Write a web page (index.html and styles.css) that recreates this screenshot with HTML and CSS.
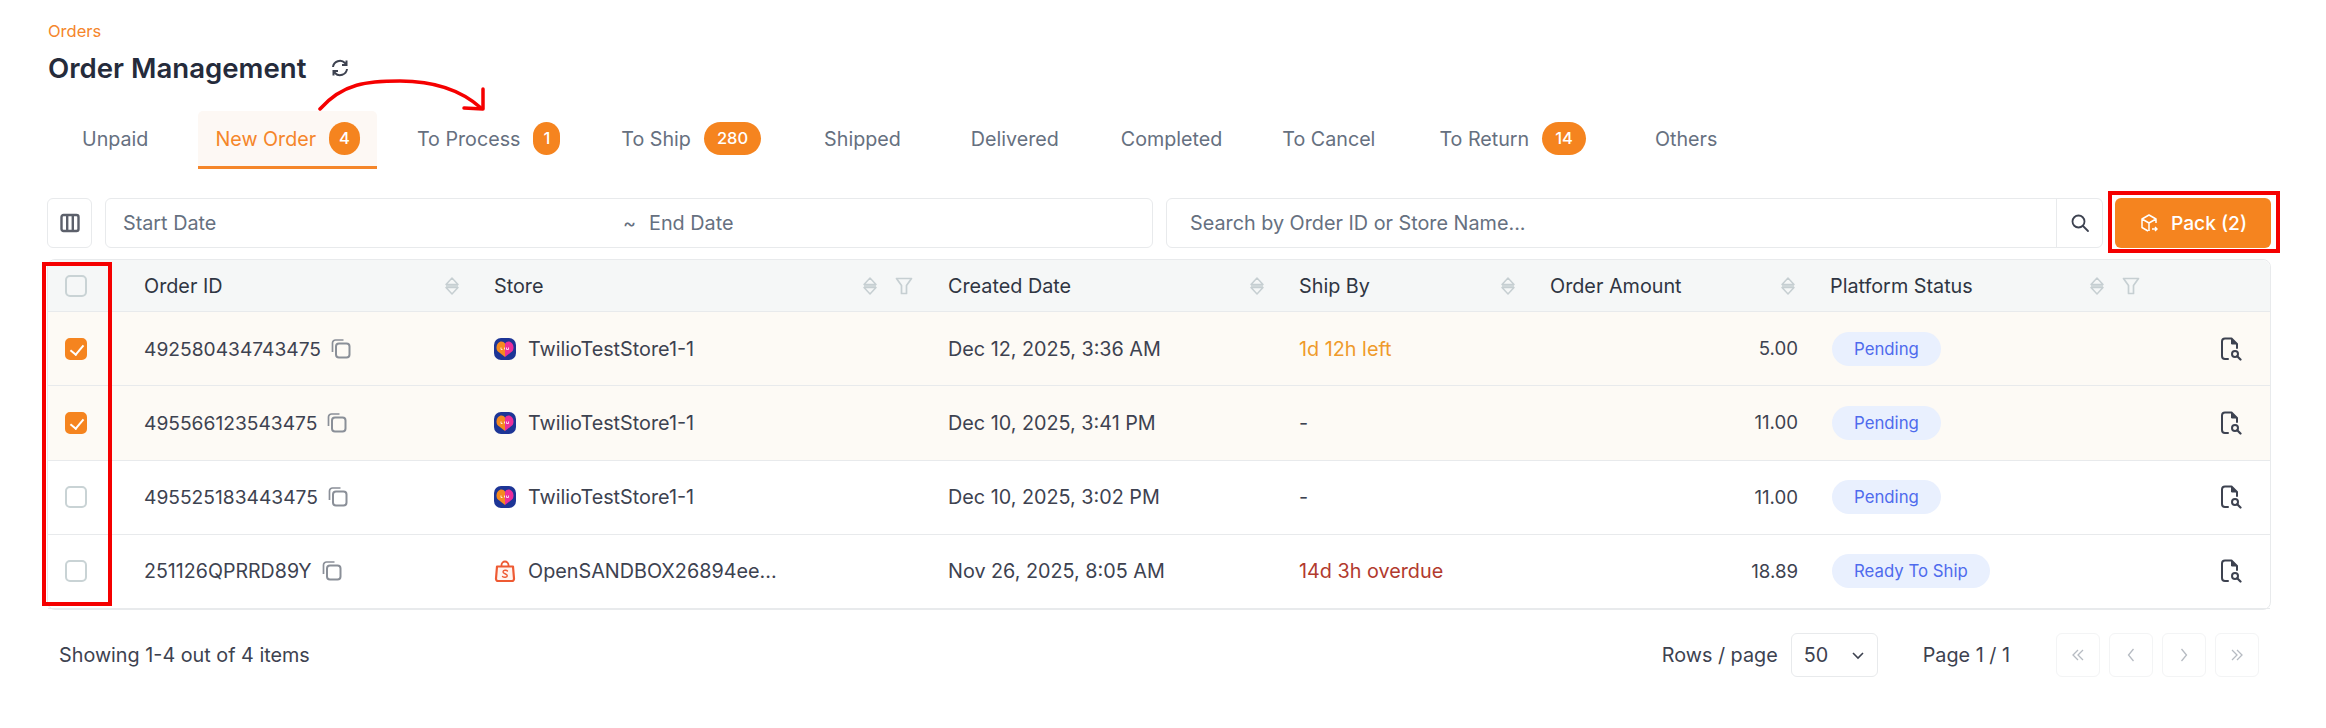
FILE: index.html
```html
<!DOCTYPE html>
<html lang="en">
  <head>
    <meta charset="UTF-8" />
    <title>Order Management</title>
    <link rel="stylesheet" href="styles.css">
  </head>
  <body>
    <svg class="sprites" width="0" height="0">
      <symbol id="i-copy" viewBox="0 0 20 20">
        <rect x="5" y="4.500" width="13.500" height="14" rx="3" fill="none" stroke="currentColor" stroke-width="2"/>
        <path d="M1.500 13V4a3 3 0 0 1 3-3h8" fill="none" stroke="currentColor" stroke-width="1.700"/>
      </symbol>
      <symbol id="i-sort" viewBox="0 0 14 18">
        <path d="M7 1 13 7.500H1Z M1 10.500H13L7 17Z" fill="none" stroke="currentColor" stroke-width="1.500" stroke-linejoin="round"/>
        <path d="M1 9H13" stroke="currentColor" stroke-width="1.500"/>
      </symbol>
      <symbol id="i-filter" viewBox="0 0 18 18">
        <path d="M1.500 1.500H16.500L11.500 8.500V16.500H6.500V8.500Z" fill="none" stroke="currentColor" stroke-width="1.700" stroke-linejoin="round"/>
      </symbol>
      <symbol id="i-doc" viewBox="0 0 24 24">
        <path d="M10 22H7a3 3 0 0 1-3-3V4.500a3 3 0 0 1 3-3h6.500L19 7v4" fill="none" stroke="currentColor" stroke-width="2" stroke-linecap="round" stroke-linejoin="round"/>
        <path d="M13.500 1.500V7H19Z" fill="currentColor" stroke="currentColor" stroke-width="1" stroke-linejoin="round"/>
        <circle cx="17" cy="17" r="3" fill="none" stroke="currentColor" stroke-width="2"/>
        <path d="M19.200 19.200 22.500 22.500" stroke="currentColor" stroke-width="2.200" stroke-linecap="round"/>
      </symbol>
      <symbol id="i-lazada" viewBox="0 0 22 22">
        <rect width="22" height="22" rx="7" fill="#1d3596"/>
        <path d="M11 19 4 13.500C2.800 12.500 2.500 11 2.500 9.500 2.500 6 5 3.500 7.500 3.500 9 3.500 10.200 4.300 11 5.500Z" fill="#f58a1f"/>
        <path d="M11 19 18 13.500C19.200 12.500 19.500 11 19.500 9.500 19.500 6 17 3.500 14.500 3.500 13 3.500 11.800 4.300 11 5.500Z" fill="#ec2f9a"/>
        <path d="M7 9.500V11.500H8.500 M10.500 9.500V11.500 M12.500 9.500V11.500H14.500V9.500" fill="none" stroke="#fff" stroke-width=".8"/>
      </symbol>
      <symbol id="i-shopee" viewBox="0 0 22 22">
        <path d="M3 6.500H19L20 18.500a2.500 2.500 0 0 1-2.500 2.700H4.500A2.500 2.500 0 0 1 2 18.500Z" fill="#fff5f0" stroke="#ee5a33" stroke-width="2.200" stroke-linejoin="round"/>
        <path d="M7.500 6.500V5a3.500 3.500 0 0 1 7 0v1.500" fill="none" stroke="#ee5a33" stroke-width="1.800"/>
        <path d="M13.500 11C12.500 9.800 9 9.800 9 12c0 2 4.300 1.500 4.300 3.700 0 2-3.500 2-4.800.7" fill="none" stroke="#ee5a33" stroke-width="1.400" stroke-linecap="round"/>
      </symbol>
    </svg>

    <div class="page">
      <svg class="arrow" viewBox="0 0 180 40" width="180" height="40">
        <path d="M2 30C25 4 50 2 82 2c34 0 62 10 81 27" fill="none" stroke="#f50000" stroke-width="3.500" stroke-linecap="round"/>
        <path d="M165 10V30L146 29" fill="none" stroke="#f50000" stroke-width="3.500" stroke-linecap="round" stroke-linejoin="round"/>
      </svg>

      <div class="crumb">Orders</div>
      <div class="title-row">
        <h1>Order Management</h1>
        <svg class="refresh" viewBox="0 0 20 20" width="20" height="20">
          <path d="M3 9a7 7 0 0 1 12-4l1 1.500 M17 11a7 7 0 0 1-12 4l-1-1.500" fill="none" stroke="currentColor" stroke-width="2"/>
          <path d="M16.500 2.500V7H12 M3.500 17.500V13H8" fill="none" stroke="currentColor" stroke-width="2"/>
        </svg>
      </div>

      <div class="tabs">
        <div class="tab">Unpaid</div>
        <div class="tab active">New Order <span class="badge">4</span></div>
        <div class="tab">To Process <span class="badge">1</span></div>
        <div class="tab">To Ship <span class="badge wide">280</span></div>
        <div class="tab">Shipped</div>
        <div class="tab">Delivered</div>
        <div class="tab">Completed</div>
        <div class="tab">To Cancel</div>
        <div class="tab">To Return <span class="badge wide">14</span></div>
        <div class="tab">Others</div>
      </div>

      <div class="toolbar">
        <button class="col-btn">
          <svg viewBox="0 0 20 20" width="20" height="20">
            <rect x="1.500" y="2" width="17" height="16" rx="2" fill="none" stroke="currentColor" stroke-width="2.400"/>
            <path d="M7.200 2V18 M12.800 2V18" stroke="currentColor" stroke-width="2.400"/>
          </svg>
        </button>
        <div class="date-range">
          <span class="date-start">Start Date</span>
          <span class="tilde">~</span>
          <span>End Date</span>
        </div>
        <div class="search">
          <span class="search-text">Search by Order ID or Store Name...</span>
          <span class="search-btn">
            <svg viewBox="0 0 20 20" width="20" height="20">
              <circle cx="8.500" cy="8.500" r="6" fill="none" stroke="currentColor" stroke-width="1.800"/>
              <path d="M13 13 18 18" stroke="currentColor" stroke-width="1.800" stroke-linecap="round"/>
            </svg>
          </span>
        </div>
        <div class="pack-wrap">
          <button class="pack">
            <svg viewBox="0 0 20 20" width="20" height="20">
              <path d="M9 18 3 14.500V6L10 2 17 6V10 M3 6 10 10 17 6 M10 10V18" fill="none" stroke="#fff" stroke-width="1.500" stroke-linejoin="round"/>
              <path d="M13 16H18 M16 14 18 16 16 18" fill="none" stroke="#fff" stroke-width="1.400"/>
            </svg>
            Pack (2)
          </button>
        </div>
      </div>

      <div class="table">
        <div class="row head">
          <div class="cell"><span class="check"></span></div>
          <div class="cell">Order ID<svg class="sort"><use href="#i-sort"/></svg></div>
          <div class="cell">Store<svg class="sort"><use href="#i-sort"/></svg><svg class="filter"><use href="#i-filter"/></svg></div>
          <div class="cell">Created Date<svg class="sort"><use href="#i-sort"/></svg></div>
          <div class="cell">Ship By<svg class="sort"><use href="#i-sort"/></svg></div>
          <div class="cell">Order Amount<svg class="sort"><use href="#i-sort"/></svg></div>
          <div class="cell">Platform Status<svg class="sort"><use href="#i-sort"/></svg><svg class="filter"><use href="#i-filter"/></svg></div>
          <div class="cell"></div>
        </div>

        <div class="row selected">
          <div class="cell"><span class="check on"></span></div>
          <div class="cell"><span class="num">492580434743475</span><svg class="copy"><use href="#i-copy"/></svg></div>
          <div class="cell"><svg class="logo"><use href="#i-lazada"/></svg>TwilioTestStore1-1</div>
          <div class="cell">Dec 12, 2025, 3:36 AM</div>
          <div class="cell warn">1d 12h left</div>
          <div class="cell amount">5.00</div>
          <div class="cell"><span class="status">Pending</span></div>
          <div class="cell action"><svg class="doc"><use href="#i-doc"/></svg></div>
        </div>

        <div class="row selected">
          <div class="cell"><span class="check on"></span></div>
          <div class="cell"><span class="num">495566123543475</span><svg class="copy"><use href="#i-copy"/></svg></div>
          <div class="cell"><svg class="logo"><use href="#i-lazada"/></svg>TwilioTestStore1-1</div>
          <div class="cell">Dec 10, 2025, 3:41 PM</div>
          <div class="cell">-</div>
          <div class="cell amount">11.00</div>
          <div class="cell"><span class="status">Pending</span></div>
          <div class="cell action"><svg class="doc"><use href="#i-doc"/></svg></div>
        </div>

        <div class="row">
          <div class="cell"><span class="check"></span></div>
          <div class="cell"><span class="num">495525183443475</span><svg class="copy"><use href="#i-copy"/></svg></div>
          <div class="cell"><svg class="logo"><use href="#i-lazada"/></svg>TwilioTestStore1-1</div>
          <div class="cell">Dec 10, 2025, 3:02 PM</div>
          <div class="cell">-</div>
          <div class="cell amount">11.00</div>
          <div class="cell"><span class="status">Pending</span></div>
          <div class="cell action"><svg class="doc"><use href="#i-doc"/></svg></div>
        </div>

        <div class="row">
          <div class="cell"><span class="check"></span></div>
          <div class="cell"><span class="code">251126QPRRD89Y</span><svg class="copy"><use href="#i-copy"/></svg></div>
          <div class="cell"><svg class="logo"><use href="#i-shopee"/></svg>OpenSANDBOX26894ee...</div>
          <div class="cell">Nov 26, 2025, 8:05 AM</div>
          <div class="cell late">14d 3h overdue</div>
          <div class="cell amount">18.89</div>
          <div class="cell"><span class="status">Ready To Ship</span></div>
          <div class="cell action"><svg class="doc"><use href="#i-doc"/></svg></div>
        </div>

        <div class="check-mark"></div>
      </div>

      <div class="footer">
        <span class="showing">Showing 1-4 out of 4 items</span>
        <span class="rows-label">Rows / page</span>
        <div class="rows-select">
          50
          <svg viewBox="0 0 14 14" width="14" height="14"><path d="M2 5 7 10 12 5" fill="none" stroke="currentColor" stroke-width="1.600"/></svg>
        </div>
        <span class="page-label">Page 1 / 1</span>
        <div class="pager">
          <button><svg viewBox="0 0 16 16" width="16" height="16"><path d="M8 3 3 8 8 13 M13 3 8 8 13 13" fill="none" stroke="currentColor" stroke-width="1.300"/></svg></button>
          <button><svg viewBox="0 0 16 16" width="16" height="16"><path d="M10.500 2 5.500 8 10.500 14" fill="none" stroke="currentColor" stroke-width="1.300"/></svg></button>
          <button><svg viewBox="0 0 16 16" width="16" height="16"><path d="M5.500 2 10.500 8 5.500 14" fill="none" stroke="currentColor" stroke-width="1.300"/></svg></button>
          <button><svg viewBox="0 0 16 16" width="16" height="16"><path d="M3 3 8 8 3 13 M8 3 13 8 8 13" fill="none" stroke="currentColor" stroke-width="1.300"/></svg></button>
        </div>
      </div>
    </div>
  </body>
</html>
```

FILE: styles.css
```css
* {
  box-sizing: border-box;
}
body {
  margin: 0;
  background-color: #fff;
  font-family: Inter, "Liberation Sans", sans-serif;
  font-size: 19.8px;
  color: #3d4250;
}
.sprites {
  position: absolute;
}
.page {
  position: relative;
  height: 728px;
  padding: 21px 55px 0 47px;
}

/* red annotations sit on top of the page */
.arrow {
  position: absolute;
  left: 318px;
  top: 79px;
}

.crumb {
  margin-left: 1px;
  font-size: 16.5px;
  line-height: 20px;
  color: #f5862a;
}
.title-row {
  display: flex;
  align-items: center;
  gap: 24px;
  height: 34px;
  margin-top: 10px;
  margin-left: 1px;
}
h1 {
  margin: 0;
  font-size: 27.6px;
  font-weight: 600;
  color: #252b3b;
}
.refresh {
  color: #3d4250;
}

.tabs {
  display: flex;
  height: 58px;
  margin-top: 26px;
  margin-left: 18px;
  font-size: 19.7px;
}
.tab {
  display: flex;
  align-items: center;
  gap: 13px;
  padding: 0 17px;
  margin-right: 28px;
  color: #667080;
  border-bottom: 3px solid transparent;
}
.tab.active {
  color: #f5862a;
  background-color: #fdf8f4;
  border-bottom-color: #f5862a;
  border-radius: 5px 5px 0 0;
}
.tab:nth-child(1) { margin-right: 33px; }
.tab:nth-child(2) { margin-right: 23px; }
.tab:nth-child(3) { margin-right: 27px; }
.tab:nth-child(4) { margin-right: 29px; }
.tab:nth-child(5) { margin-right: 36px; }
.tab:nth-child(7) { margin-right: 26px; }
.tab:nth-child(8) { margin-right: 30px; }
.tab:nth-child(9) { margin-right: 35px; }
.badge {
  height: 33px;
  padding: 0 10px;
  border-radius: 17px;
  background-color: #f5841f;
  color: #fff;
  font-size: 16.5px;
  font-weight: 500;
  line-height: 33px;
  text-align: center;
}
.badge.wide {
  padding: 0 13px;
}

.toolbar {
  display: flex;
  height: 50px;
  margin-top: 29px;
}
.col-btn {
  display: flex;
  align-items: center;
  justify-content: center;
  width: 45px;
  padding: 0;
  background: #fff;
  border: 1.500px solid #e8eaec;
  border-radius: 6px;
  color: #5c606b;
}
.date-range {
  display: flex;
  align-items: center;
  width: 1048px;
  margin-left: 13px;
  padding-left: 17px;
  border: 1.500px solid #e8eaec;
  border-radius: 6px;
  color: #667080;
}
.date-start {
  width: 500px;
}
.tilde {
  width: 26px;
}
.search {
  display: flex;
  align-items: center;
  width: 937px;
  margin-left: 13px;
  padding-left: 23px;
  border: 1.500px solid #e8eaec;
  border-radius: 6px;
  color: #667080;
}
.search-text {
  flex: 1;
}
.search-btn {
  display: flex;
  align-items: center;
  justify-content: center;
  width: 46px;
  height: 100%;
  border-left: 1.500px solid #e8eaec;
  color: #3d4250;
}
.pack-wrap {
  position: relative;
  margin-left: 12px;
}
.pack-wrap::after {
  content: "";
  position: absolute;
  inset: -7px -9px -5px -7px;
  border: 4px solid #f50000;
}
.pack {
  display: flex;
  align-items: center;
  justify-content: center;
  gap: 12px;
  width: 156px;
  height: 100%;
  padding: 0;
  border: none;
  border-radius: 6px;
  background-color: #f5841f;
  color: #fff;
  font-family: inherit;
  font-size: 19.2px;
  font-weight: 500;
}

.table {
  position: relative;
  width: 2224px;
  margin-top: 11px;
  border: 1.500px solid #e8eaec;
  border-radius: 8px;
}
.row {
  display: grid;
  grid-template-columns: 72px 350px 454px 351px 251px 280px 345px 118px;
  height: 74.25px;
  border-bottom: 1.500px solid #e8eaec;
}
.row:last-of-type {
  border-bottom: none;
}
.row.head {
  height: 52px;
  background-color: #f5f7f7;
  border-radius: 8px 8px 0 0;
  color: #2f3542;
}
.row.selected {
  background-color: #fdfaf5;
}
.cell {
  display: flex;
  align-items: center;
  padding: 0 24px;
  min-width: 0;
}
.row .cell:first-child {
  padding: 0 0 0 17px;
}
.head .cell {
  padding-right: 11px;
}
.num {
  font-size: 19.2px;
}
.code {
  font-size: 19.6px;
}
.amount {
  justify-content: flex-end;
  padding-right: 8px;
  font-size: 18.67px;
}
.action {
  justify-content: flex-end;
  padding-right: 27px;
}
.warn {
  color: #ef9a2b;
}
.late {
  color: #b23a2e;
}
.check {
  display: block;
  width: 22px;
  height: 22px;
  border: 2px solid #c9d3d5;
  border-radius: 5px;
  background-color: #fff;
}
.head .check {
  background-color: #f5f7f7;
}
.check.on {
  position: relative;
  border-color: #f5841f;
  background-color: #f5841f;
}
.check.on::after {
  content: "";
  position: absolute;
  left: 6px;
  top: 2.500px;
  width: 6px;
  height: 11px;
  border: solid #fff;
  border-width: 0 2px 2px 0;
  transform: rotate(40deg);
}

/* tall red box around the checkbox column */
.check-mark {
  position: absolute;
  left: -6.500px;
  top: 1.500px;
  width: 70px;
  height: 344px;
  border: 4px solid #f50000;
}

.sort {
  width: 14px;
  height: 18px;
  margin-left: auto;
  color: #c6cfd2;
}
.filter {
  width: 18px;
  height: 18px;
  margin-left: 18px;
  color: #c6cfd2;
}
.copy {
  width: 20px;
  height: 20px;
  margin-left: 10px;
  color: #8a8f98;
}
.logo {
  width: 22px;
  height: 22px;
  margin-right: 12px;
}
.doc {
  width: 24px;
  height: 24px;
  color: #3d4250;
}
.status {
  height: 34px;
  margin-left: 2px;
  padding: 0 22px;
  border-radius: 17px;
  background-color: #e9f0fe;
  color: #4f6bed;
  font-size: 16.8px;
  line-height: 34px;
}

.footer {
  display: flex;
  align-items: center;
  height: 44px;
  margin-top: 23px;
  padding-left: 12px;
}
.showing {
  margin-right: auto;
}
.rows-select {
  display: flex;
  align-items: center;
  justify-content: space-between;
  width: 87px;
  height: 44px;
  margin-left: 13px;
  padding: 0 12px;
  border: 1.500px solid #e8eaec;
  border-radius: 6px;
}
.page-label {
  margin-left: 45px;
}
.pager {
  display: flex;
  gap: 9px;
  margin-left: 46px;
  margin-right: 12px;
}
.pager button {
  display: flex;
  align-items: center;
  justify-content: center;
  width: 44px;
  height: 44px;
  padding: 0;
  background: #fff;
  border: 1px solid #f3f4f5;
  border-radius: 6px;
  color: #b6bbc2;
}
```
